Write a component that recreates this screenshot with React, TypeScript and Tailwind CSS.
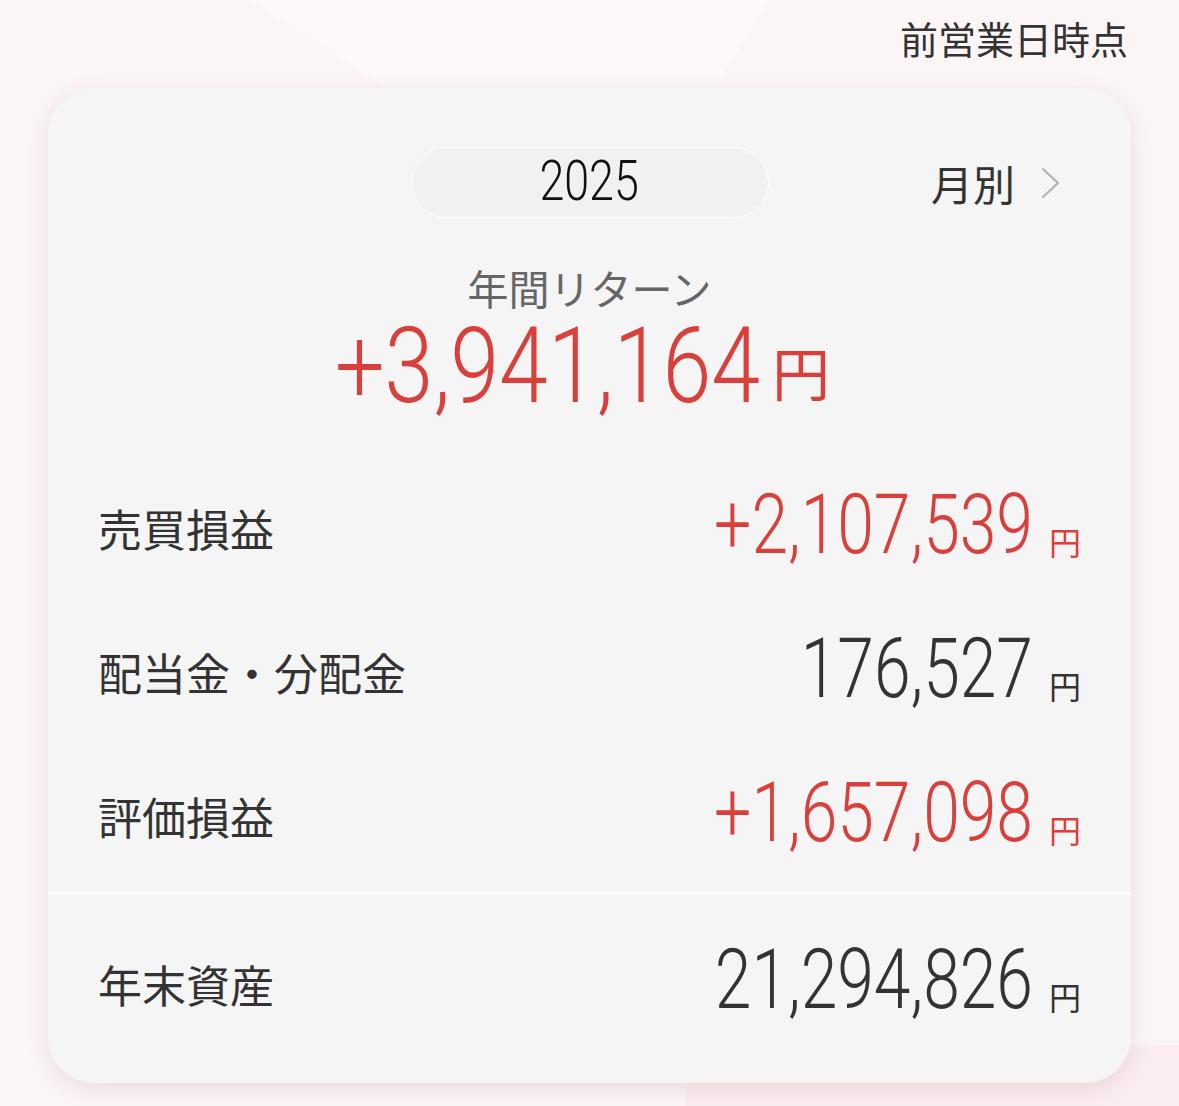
const jp = { fontFamily: '"Noto Sans CJK JP", "Noto Sans", sans-serif' };
const num = { fontFamily: 'Roboto, "Liberation Sans", sans-serif' };

interface RowProps {
  label: string;
  value: string;
  red?: boolean;
}

function Row({ label, value, red }: RowProps) {
  const color = red ? 'text-[#d9403b]' : 'text-[#333333]';
  return (
    <div className="flex h-[144px] items-center justify-between pl-[50px] pr-[50px]">
      <span className="mb-[8px] text-[44px] leading-none text-[#333333]" style={jp}>
        {label}
      </span>
      <div className={`mb-[14px] flex items-end ${color}`}>
        <span className="scale-y-[1.26] text-[66px] font-light leading-none" style={num}>
          {value}
        </span>
        <span className="mb-[1px] ml-[16px] text-[32px] leading-none" style={jp}>
          円
        </span>
      </div>
    </div>
  );
}

function Chevron() {
  return (
    <svg width="20" height="32" viewBox="0 0 20 32" fill="none" className="text-[#b3b3b3]">
      <path d="M2 2 L17 16 L2 30" stroke="currentColor" strokeWidth="2.2" strokeLinecap="round" strokeLinejoin="round" />
    </svg>
  );
}

function Backdrop() {
  return (
    <svg className="absolute inset-0 h-full w-full" viewBox="0 0 1179 1106" preserveAspectRatio="none">
      <rect width="1179" height="1106" fill="#fcf5f6" />
      <polygon points="250,0 770,0 700,110 420,110" fill="#ffffff" opacity="0.35" />
      <polygon points="686,1050 1179,1045 1179,1106 686,1106" fill="#fbeaec" opacity="0.7" />
    </svg>
  );
}

export default function App() {
  return (
    <div className="relative h-[1106px] w-full overflow-hidden">
      <Backdrop />
      <div className="relative">
        {/* 基準日 */}
        <div className="flex justify-end pr-[51px] pt-[19px]">
          <span className="text-[38px] leading-none text-[#333333]" style={jp}>
            前営業日時点
          </span>
        </div>

        {/* カード */}
        <div className="mx-[48px] mt-[31px] h-[995px] overflow-hidden rounded-[46px] bg-[#f5f5f5] shadow-[0_6px_22px_rgba(140,90,100,0.16)]">
          <div className="mt-[59px] grid grid-cols-[1fr_358px_1fr]">
            <div />
            <div className="flex h-[71px] items-center justify-center rounded-full border border-white bg-[#f1f1f1]">
              <span className="mt-[-4px] scale-x-[0.8] text-[56px] font-light leading-none text-[#111111]" style={num}>
                2025
              </span>
            </div>
            <div className="flex items-center justify-end gap-[26px] pr-[70px]">
              <span className="text-[42px] leading-none text-[#333333]" style={jp}>
                月別
              </span>
              <Chevron />
            </div>
          </div>

          <div className="mt-[49px] text-center">
            <span className="text-[41px] leading-none text-[#666666]" style={jp}>
              年間リターン
            </span>
          </div>

          <div className="mt-[11px] flex justify-center pr-[14px] text-[#d9403b]">
            <div className="flex items-end">
              <span className="scale-y-[1.2] text-[88px] font-light leading-none" style={num}>
                +3,941,164
              </span>
              <span className="mb-[10px] ml-[12px] text-[58px] leading-none" style={jp}>
                円
              </span>
            </div>
          </div>

          <div className="mt-[50px]">
            <Row label="売買損益" value="+2,107,539" red />
            <Row label="配当金・分配金" value="176,527" />
            <Row label="評価損益" value="+1,657,098" red />
          </div>

          <div className="border-t-2 border-white">
            <div className="flex h-[180px] items-center justify-between pl-[50px] pr-[50px]">
              <span className="text-[44px] leading-none text-[#333333]" style={jp}>
                年末資産
              </span>
              <div className="mb-[8px] flex items-end text-[#333333]">
                <span className="scale-y-[1.26] text-[66px] font-light leading-none" style={num}>
                  21,294,826
                </span>
                <span className="mb-[1px] ml-[16px] text-[32px] leading-none" style={jp}>
                  円
                </span>
              </div>
            </div>
          </div>
        </div>
      </div>
    </div>
  );
}
